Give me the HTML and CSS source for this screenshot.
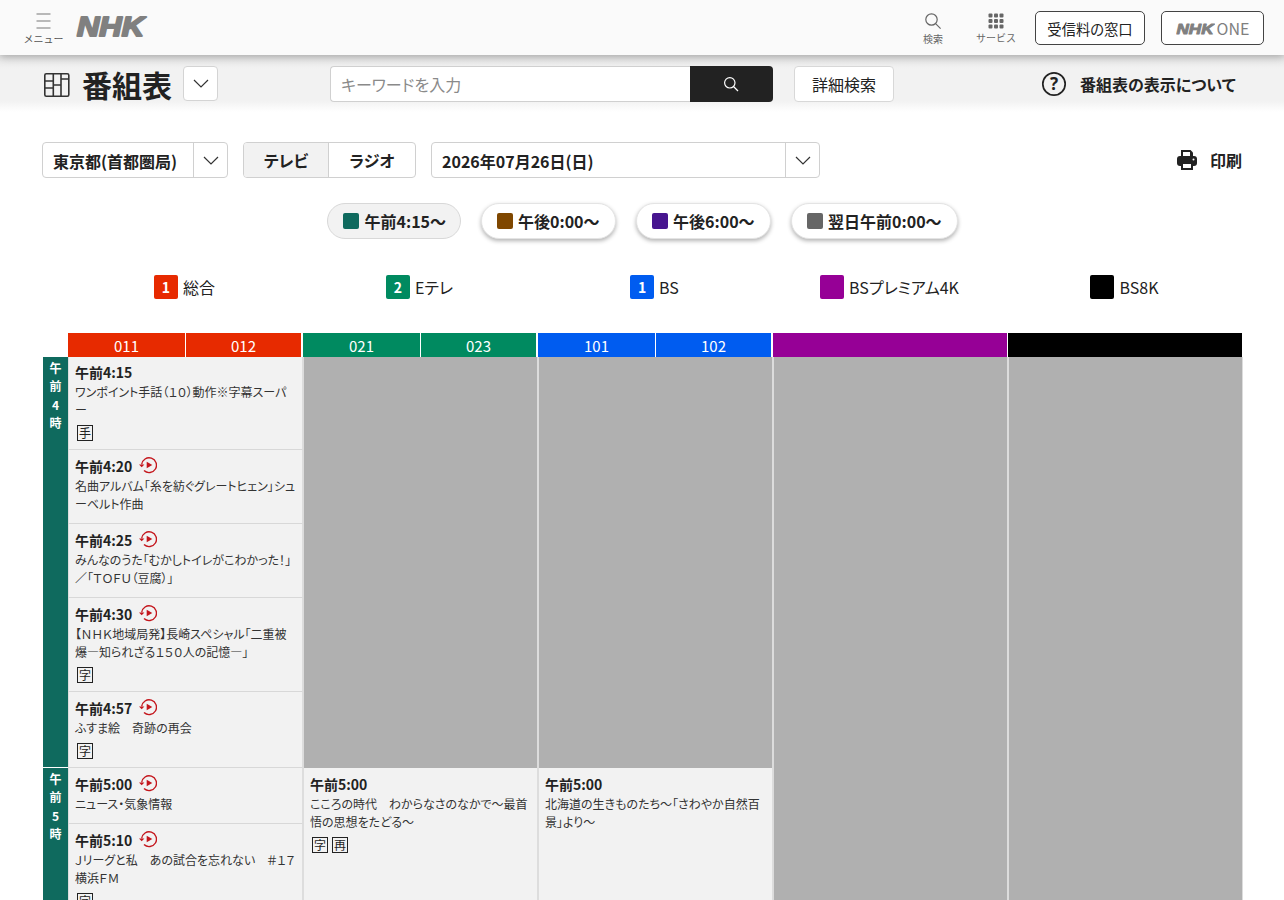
FILE: index.html
```html
<!DOCTYPE html>
<html lang="ja">
<head>
<meta charset="utf-8">
<title>番組表</title>
<link rel="stylesheet" href="styles.css">
</head>
<body>
<div class="page">
<header class="topbar">
  <div class="top-left">
    <div class="menu">
      <svg class="menu-icon" width="16" height="16" viewBox="0 0 16 16"><path d="M0.5 1h14M0.5 8h14M0.5 15h14" stroke="#777" stroke-width="1.2" fill="none"/></svg>
      <span class="tiny">メニュー</span>
    </div>
    <svg class="nhk-logo" width="72" height="32" viewBox="0 0 72 32"><text x="1" y="25.5" textLength="67" lengthAdjust="spacingAndGlyphs" class="logo-text">NHK</text></svg>
  </div>
  <div class="top-right">
    <div class="top-tool search-tool">
      <svg width="18" height="18" viewBox="0 0 18 18"><circle cx="7.5" cy="7.5" r="5.7" stroke="#666" stroke-width="1.2" fill="none"/><path d="M11.6 11.6l5 5" stroke="#666" stroke-width="1.2"/></svg>
      <span class="tiny">検索</span>
    </div>
    <div class="top-tool service-tool">
      <svg width="16" height="16" viewBox="0 0 16 16" fill="#666"><rect x="0.5" y="0.5" width="4" height="4" rx="1"/><rect x="6" y="0.5" width="4" height="4" rx="1"/><rect x="11.5" y="0.5" width="4" height="4" rx="1"/><rect x="0.5" y="6" width="4" height="4" rx="1"/><rect x="6" y="6" width="4" height="4" rx="1"/><rect x="11.5" y="6" width="4" height="4" rx="1"/><rect x="0.5" y="11.5" width="4" height="4" rx="1"/><rect x="6" y="11.5" width="4" height="4" rx="1"/><rect x="11.5" y="11.5" width="4" height="4" rx="1"/></svg>
      <span class="tiny">サービス</span>
    </div>
    <a class="top-btn fee-btn">受信料の窓口</a>
    <a class="top-btn one-btn"><svg width="39" height="18" viewBox="0 0 39 18"><text x="0.5" y="14.5" textLength="37" lengthAdjust="spacingAndGlyphs" class="logo-text-small">NHK</text></svg><span>ONE</span></a>
  </div>
</header>

<section class="subbar">
  <div class="sub-title">
    <svg class="grid-icon" width="26" height="24" viewBox="0 0 26 24" fill="none" stroke="#333" stroke-width="1.6"><rect x="0.8" y="0.8" width="24" height="22.4" rx="1.5"/><path d="M9.3 1v22M17 1v22M1 8h8.3M1 15h8.3M9.3 12h7.7M17 6h8"/></svg>
    <h1>番組表</h1>
    <button class="square-select"><svg class="chev" width="16" height="9" viewBox="0 0 16 9"><path d="M1 1l7 7 7-7" fill="none" stroke="#333" stroke-width="1.2"/></svg></button>
  </div>
  <div class="search-group">
    <div class="search-field">キーワードを入力</div>
    <button class="search-btn"><svg width="16" height="16" viewBox="0 0 16 16"><circle cx="6.8" cy="6.8" r="5.2" stroke="#fff" stroke-width="1.2" fill="none"/><path d="M10.5 10.5l4.5 4.5" stroke="#fff" stroke-width="1.2"/></svg></button>
  </div>
  <button class="detail-btn">詳細検索</button>
  <a class="about"><svg width="26" height="26" viewBox="0 0 26 26"><circle cx="13" cy="13" r="11.2" fill="none" stroke="#222" stroke-width="1.7"/><text x="13" y="19" class="q-mark">?</text></svg><span>番組表の表示について</span></a>
</section>

<section class="controls">
  <div class="select area-select"><span class="select-text">東京都(首都圏局)</span><span class="select-arrow"><svg width="16" height="9" viewBox="0 0 16 9"><path d="M1 1l7 7 7-7" fill="none" stroke="#333" stroke-width="1.2"/></svg></span></div>
  <div class="tabs"><span class="tab tab-on">テレビ</span><span class="tab">ラジオ</span></div>
  <div class="select date-select"><span class="select-text">2026年07月26日(日)</span><span class="select-arrow"><svg width="16" height="9" viewBox="0 0 16 9"><path d="M1 1l7 7 7-7" fill="none" stroke="#333" stroke-width="1.2"/></svg></span></div>
  <a class="print"><svg width="22" height="22" viewBox="0 0 22 22"><path d="M5 1h9.5L17 3.5V8H5z" fill="#222"/><path d="M7 3h7v4H7z" fill="#fff"/><rect x="1" y="7" width="20" height="10" rx="3" fill="#222"/><path d="M5 13h12v8H5z" fill="#222"/><path d="M7 15h8v4H7z" fill="#fff"/><circle cx="17.5" cy="10.5" r="1" fill="#fff"/></svg><span>印刷</span></a>
</section>

<nav class="chips">
  <span class="chip chip-on"><i class="sq c-teal"></i>午前4:15〜</span>
  <span class="chip"><i class="sq c-brown"></i>午後0:00〜</span>
  <span class="chip"><i class="sq c-indigo"></i>午後6:00〜</span>
  <span class="chip"><i class="sq c-gray"></i>翌日午前0:00〜</span>
</nav>

<div class="legend">
  <div class="leg"><b class="badge b-red">1</b>総合</div>
  <div class="leg"><b class="badge b-green">2</b>Eテレ</div>
  <div class="leg"><b class="badge b-blue">1</b>BS</div>
  <div class="leg"><b class="badge b-purple"></b>BSプレミアム4K</div>
  <div class="leg"><b class="badge b-black"></b>BS8K</div>
</div>

<div class="schedule">
  <div class="corner"></div>
  <div class="ch-head b-red"><span>011</span><span>012</span></div>
  <div class="ch-head b-green"><span>021</span><span>023</span></div>
  <div class="ch-head b-blue"><span>101</span><span>102</span></div>
  <div class="ch-head b-purple"></div>
  <div class="ch-head b-black"></div>

  <div class="hours">
    <div class="hour h4"><span>午</span><span>前</span><span>4</span><span>時</span></div>
    <div class="hour"><span>午</span><span>前</span><span>5</span><span>時</span></div>
  </div>

  <div class="col">
    <article class="prog p93"><div class="t">午前4:15</div><p>ワンポイント手話（１０）動作※字幕スーパー</p><div class="marks"><em>手</em></div></article>
    <article class="prog p74"><div class="t">午前4:20<svg class="replay"><use href="#replay"/></svg></div><p>名曲アルバム「糸を紡ぐグレートヒェン」シューベルト作曲</p></article>
    <article class="prog p74"><div class="t">午前4:25<svg class="replay"><use href="#replay"/></svg></div><p>みんなのうた「むかしトイレがこわかった！」／「ＴＯＦＵ（豆腐）」</p></article>
    <article class="prog p94"><div class="t">午前4:30<svg class="replay"><use href="#replay"/></svg></div><p>【ＮＨＫ地域局発】長崎スペシャル「二重被爆―知られざる１５０人の記憶―」</p><div class="marks"><em>字</em></div></article>
    <article class="prog p76"><div class="t">午前4:57<svg class="replay"><use href="#replay"/></svg></div><p>ふすま絵　奇跡の再会</p><div class="marks"><em>字</em></div></article>
    <article class="prog p56"><div class="t">午前5:00<svg class="replay"><use href="#replay"/></svg></div><p>ニュース・気象情報</p></article>
    <article class="prog p94"><div class="t">午前5:10<svg class="replay"><use href="#replay"/></svg></div><p>Ｊリーグと私　あの試合を忘れない　＃１７　横浜ＦＭ</p><div class="marks"><em>字</em></div></article>
  </div>
  <div class="col">
    <div class="blank b410"></div>
    <article class="prog tall"><div class="t">午前5:00</div><p>こころの時代　わからなさのなかで〜最首悟の思想をたどる〜</p><div class="marks"><em>字</em><em>再</em></div></article>
  </div>
  <div class="col">
    <div class="blank b410"></div>
    <article class="prog tall"><div class="t">午前5:00</div><p>北海道の生きものたち〜「さわやか自然百景」より〜</p></article>
  </div>
  <div class="col"><div class="blank fill"></div></div>
  <div class="col"><div class="blank fill"></div></div>
</div>
</div>
<svg class="defs" width="0" height="0"><defs><symbol id="replay" viewBox="0 0 18 18"><path d="M2.7 8.4A7.4 7.4 0 1 1 5 14.6" fill="none" stroke="#c4161c" stroke-width="1.4"/><path d="M0 8.4l2.7 2.8 2.7-2.8z" fill="#c4161c"/><path d="M7.7 5.7l5.6 3.3-5.6 3.3z" fill="#c4161c"/></symbol></defs></svg>
</body>
</html>
```
FILE: styles.css
```css
* { box-sizing: border-box; }
html, body { margin: 0; padding: 0; height: 900px; overflow: hidden; background: #fff; }
body { font-family: "Noto Sans CJK JP", "Noto Sans", sans-serif; color: #222; font-feature-settings: "palt"; }
.page { width: 1284px; height: 900px; overflow: hidden; }
button { font: inherit; color: inherit; padding: 0; font-feature-settings: inherit; }
.defs { display: block; height: 0; }

.topbar { height: 55px; background: #fafafa; display: flex; justify-content: space-between; position: relative; z-index: 2; box-shadow: 0 2px 8px rgba(0,0,0,.28); padding: 0 20px 0 24px; }
.top-left { display: flex; align-items: flex-start; }
.menu { width: 39px; display: flex; flex-direction: column; align-items: center; padding-top: 13px; }
.menu-icon { display: block; height: 16px; }
.tiny { font-size: 10px; line-height: 14px; color: #555; white-space: nowrap; margin-top: 3px; font-feature-settings: normal; }
.nhk-logo { margin: 10px 0 0 13px; }
.logo-text { font-family: "Liberation Sans", sans-serif; font-weight: 700; font-style: italic; font-size: 27px; fill: #808080; stroke: #808080; stroke-width: 2px; stroke-linejoin: round; }
.logo-text-small { font-family: "Liberation Sans", sans-serif; font-weight: 700; font-style: italic; font-size: 15px; fill: #808080; stroke: #808080; stroke-width: 1px; stroke-linejoin: round; }
.top-right { display: flex; align-items: flex-start; }
.top-tool { display: flex; flex-direction: column; align-items: center; padding-top: 12px; }
.top-tool svg { display: block; }
.top-tool .tiny { color: #666; margin-top: 2px; }
.search-tool { width: 30px; }
.service-tool { width: 44px; margin-left: 26px; padding-top: 13px; }
.top-btn { height: 34px; margin-top: 11px; border: 1px solid #444; border-radius: 5px; background: #fff; display: flex; align-items: center; justify-content: center; font-size: 14.3px; }
.fee-btn { width: 110px; margin-left: 17px; }
.one-btn { width: 103px; margin-left: 16px; color: #808080; font-size: 16px; }
.one-btn svg { display: block; margin-right: 2px; }

.subbar { height: 57px; background: linear-gradient(#e6e6e6 0, #f2f2f2 14px, #f2f2f2 46px, #fff 57px); display: flex; align-items: flex-start; padding: 11px 0 0 44px; position: relative; }
.sub-title { display: flex; align-items: center; width: 286px; height: 36px; }
.grid-icon { display: block; margin-top: 2px; }
h1 { margin: 0 0 0 12px; font-size: 30px; font-weight: 700; line-height: 36px; color: #222; }
.square-select { width: 35px; height: 35px; margin: 0 0 1px 11px; background: #fff; border: 1px solid #d4d4d4; border-radius: 4px; display: flex; align-items: center; justify-content: center; }
.search-group { display: flex; width: 443px; height: 36px; }
.search-field { flex: 1; background: #fff; border: 1px solid #d0d0d0; border-right: 0; border-radius: 4px 0 0 4px; font-size: 16px; line-height: 35px; padding-left: 10px; color: #8a8a8a; }
.search-btn { width: 83px; background: #222; border: 0; border-radius: 0 4px 4px 0; display: flex; align-items: center; justify-content: center; padding-right: 1px; }
.detail-btn { width: 100px; height: 36px; margin-left: 21px; background: #fff; border: 1px solid #d8d8d8; border-radius: 4px; font-size: 16px; }
.about { display: flex; align-items: center; margin-left: 147px; height: 36px; font-size: 16px; font-weight: 700; }
.about svg { display: block; margin-right: 13px; }
.q-mark { font-family: "Noto Sans", sans-serif; font-size: 17px; font-weight: 700; text-anchor: middle; fill: #222; }

.controls { display: flex; align-items: flex-start; padding: 30px 42px 0; }
.select { height: 36px; background: #fff; border: 1px solid #d0d0d0; border-radius: 4px; display: flex; align-items: stretch; font-size: 16px; font-weight: 700; }
.select-text { flex: 1; line-height: 36px; padding-left: 10px; white-space: nowrap; }
.select-arrow { width: 34px; border-left: 1px solid #d0d0d0; display: flex; align-items: center; justify-content: center; }
.area-select { width: 186px; }
.date-select { width: 389px; }
.tabs { display: flex; height: 36px; margin: 0 15px; width: 173px; border: 1px solid #d0d0d0; border-radius: 4px; overflow: hidden; }
.tab { flex: 1; text-align: center; font-size: 16px; font-weight: 700; line-height: 34px; }
.tab-on { flex: none; width: 85px; background: #f2f2f2; border-right: 1px solid #d0d0d0; }
.print { margin-left: auto; display: flex; align-items: center; height: 36px; font-size: 16px; font-weight: 700; }
.print svg { display: block; margin-right: 12px; }

.chips { display: flex; justify-content: flex-start; gap: 20px; padding: 25px 0 0 327px; }
.chip { height: 36px; display: flex; align-items: center; padding: 0 15px; border-radius: 18px; background: #fff; font-size: 16px; font-weight: 700; white-space: nowrap; box-shadow: 0 2px 4px rgba(0,0,0,.3); border: 1px solid #e4e4e4; }
.chip-on { padding-right: 13.5px; background: #f2f2f2; box-shadow: none; border: 1px solid #d8d8d8; }
.sq { display: block; width: 16px; height: 16px; border-radius: 2px; margin-right: 5.5px; }
.c-teal { background: #0f6a5e; }
.c-brown { background: #7f4700; }
.c-indigo { background: #47158f; }
.c-gray { background: #666; }

.legend { display: grid; grid-template-columns: repeat(5, 235px); padding: 36px 0 0 67px; height: 94px; }
.leg { display: flex; align-items: flex-start; justify-content: center; height: 24px; font-size: 16px; line-height: 25px; }
.badge { display: block; width: 24px; height: 24px; border-radius: 2px; color: #fff; font-size: 14px; font-weight: 700; text-align: center; line-height: 24px; margin-right: 5px; }
.b-red { background: #e72a00; }
.b-green { background: #008a60; }
.b-blue { background: #005cf0; }
.b-purple { background: #960096; }
.b-black { background: #000; }

.schedule { display: grid; grid-template-columns: 25px repeat(5, 235px); margin-left: 43px; width: 1200px; }
.corner { height: 24px; }
.ch-head { height: 24px; display: flex; color: #fff; font-size: 15px; line-height: 25px; margin-right: 2px; }
.ch-head.b-purple, .ch-head.b-black { margin-right: 1px; }
.ch-head span { flex: 1; text-align: center; }
.ch-head span:first-child { flex: none; width: 117px; }
.ch-head span + span { border-left: 1px solid #fff; }
.hours { display: flex; flex-direction: column; background: #0f6a5e; }
.hour { display: flex; flex-direction: column; align-items: center; color: #fff; font-size: 12px; font-weight: 700; line-height: 18.4px; padding-top: 2px; }
.h4 { height: 411px; border-bottom: 1px solid #fff; }
.col { display: flex; flex-direction: column; min-width: 0; }
.blank { background: #b0b0b0; border-left: 1px solid #dcdcdc; border-right: 1px solid #dcdcdc; }
.b410 { height: 411px; flex: none; }
.fill { height: 560px; }
.prog { background: #f2f2f2; border-left: 1px solid #ddd; border-right: 1px solid #ddd; border-bottom: 1px solid #d8d8d8; padding: 4px 6px 0 6px; overflow: hidden; flex: none; }
.prog + .prog { padding-top: 5px; }
.p93 { height: 93px; }
.p74 { height: 74px; }
.p94 { height: 94px; }
.p76 { height: 76px; }
.p56 { height: 56px; }
.tall { height: 160px; border-bottom: 0; }
.blank + .tall { padding-top: 5px; }
.t { display: flex; align-items: center; font-size: 14px; font-weight: 700; line-height: 22px; height: 22px; color: #222; }
.replay { width: 18px; height: 18px; margin: -3px 0 0 7px; display: block; }
.prog p { margin: 0; font-size: 12px; line-height: 18px; color: #333; }
.marks { display: flex; gap: 4px; padding: 6px 0 0 2px; }
.marks em { display: block; width: 16px; height: 16px; border: 1px solid #222; font-style: normal; font-size: 12px; line-height: 14px; text-align: center; }
```
